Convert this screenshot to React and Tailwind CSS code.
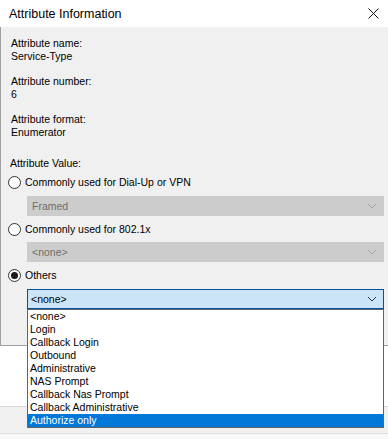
import React from 'react';

const Chevron = ({ color }) => (
  <svg width="10" height="6" viewBox="0 0 10 6" className="shrink-0">
    <path d="M1 1 L5 5 L9 1" fill="none" stroke={color} strokeWidth="1" />
  </svg>
);

const Radio = ({ checked, label }) => (
  <div className="flex items-center h-[15px] pl-[7px]">
    <span className="w-[13px] h-[13px] rounded-full border border-[#333333] bg-white flex items-center justify-center shrink-0">
      {checked && <span className="w-[7px] h-[7px] rounded-full bg-[#1a1a1a]" />}
    </span>
    <span className="ml-[4px] leading-[13px]">{label}</span>
  </div>
);

const Combo = ({ value, disabled, open, children }) => (
  <div className="relative ml-[26px] w-[357px]">
    <div
      className={
        disabled
          ? 'h-[20px] flex items-center justify-between pl-[4px] pr-[6px] bg-[#cccccc] border border-[#cccccc] text-[#6d6d6d]'
          : 'h-[20px] flex items-center justify-between pl-[3px] pr-[6px] bg-[#cce4f7] border border-[#005499] text-black'
      }
    >
      <span className="leading-[13px]">{value}</span>
      <Chevron color={disabled ? '#a6a6a6' : '#333333'} />
    </div>
    {open && children}
  </div>
);

const items = [
  '<none>',
  'Login',
  'Callback Login',
  'Outbound',
  'Administrative',
  'NAS Prompt',
  'Callback Nas Prompt',
  'Callback Administrative',
  'Authorize only'
];

export default function App() {
  return (
    <div className="w-[388px] h-[439px] overflow-hidden bg-white text-black text-[10.5px] font-['Liberation_Sans',Arial,sans-serif]">
      {/* title bar */}
      <div className="h-[27px] bg-white flex items-center justify-between pl-[9px] pr-[9px]">
        <span className="text-[12.5px] leading-[16px] text-black">Attribute Information</span>
        <svg width="11" height="11" viewBox="0 0 11 11">
          <path d="M0.5 0.5 L10.5 10.5 M10.5 0.5 L0.5 10.5" stroke="#111" strokeWidth="1" />
        </svg>
      </div>

      {/* dialog body */}
      <div className="h-[318px] bg-[#f0f0f0] border-l border-[#a0a0a0] pt-[10px]">
        <div className="pl-[10px] leading-[13px]">
          <div>Attribute name:</div>
          <div>Service-Type</div>
        </div>
        <div className="pl-[10px] leading-[13px] mt-[12px]">
          <div>Attribute number:</div>
          <div>6</div>
        </div>
        <div className="pl-[10px] leading-[13px] mt-[12px]">
          <div>Attribute format:</div>
          <div>Enumerator</div>
        </div>

        <div className="pl-[9px] leading-[13px] mt-[18px]">Attribute Value:</div>

        <div className="mt-[5px]">
          <Radio label="Commonly used for Dial-Up or VPN" />
        </div>
        <div className="mt-[6px]">
          <Combo value="Framed" disabled />
        </div>

        <div className="mt-[6px]">
          <Radio label="Commonly used for 802.1x" />
        </div>
        <div className="mt-[5px]">
          <Combo value="<none>" disabled />
        </div>

        <div className="mt-[6px]">
          <Radio checked label="Others" />
        </div>
        <div className="mt-[6px]">
          <Combo value="<none>" open>
            <div className="absolute top-full left-0 w-[357px] z-10 bg-white border border-[#646464]">
              {items.map((it, i) => (
                <div
                  key={it}
                  className={
                    i === items.length - 1
                      ? 'h-[13px] leading-[13px] pl-[2px] bg-[#0078d7] text-white'
                      : 'h-[13px] leading-[13px] pl-[2px] text-black'
                  }
                >
                  {it}
                </div>
              ))}
            </div>
          </Combo>
        </div>
      </div>

      <div className="h-[1px] bg-[#a0a0a0]" />
      <div className="h-[60px] bg-white" />
      <div className="h-[1px] bg-[#dadada]" />
      <div className="h-[26px] bg-[#f0f0f0]" />
      <div className="h-[1px] bg-[#dfdfdf]" />
      <div className="h-[6px] bg-[#f9f9f9]" />
    </div>
  );
}
